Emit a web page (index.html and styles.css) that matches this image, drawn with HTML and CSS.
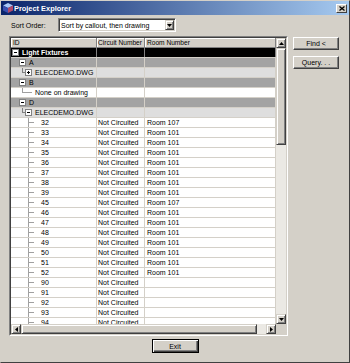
FILE: index.html
```html
<!DOCTYPE html>
<html lang="en">
<head>
  <meta charset="UTF-8">
  <title>Project Explorer</title>
  <link rel="stylesheet" href="styles.css">
</head>
<body>
  <div class="window">
    <div class="titlebar">
      <svg class="app-icon" width="10" height="10" viewBox="0 0 10 10">
        <polygon points="5,0 10,2.5 5,5 0,2.5" fill="#a8c8f8"/>
        <polygon points="0,2.5 5,5 5,10 0,7.5" fill="#3a4fb0"/>
        <polygon points="5,5 10,2.5 10,7.5 5,10" fill="#b04a6a"/>
      </svg>
      <span class="title">Project Explorer</span>
      <span class="close">
        <svg width="6" height="5" viewBox="0 0 6 5"><path d="M0.5 0.5 L5.5 4.5 M5.5 0.5 L0.5 4.5" stroke="#000" stroke-width="1.3"/></svg>
      </span>
    </div>

    <div class="content">
      <div class="sort-row">
        <span class="sort-label">Sort Order:</span>
        <div class="combo">
          <span class="combo-text">Sort by callout, then drawing</span>
          <span class="combo-btn"><svg width="5" height="3" viewBox="0 0 5 3"><polygon points="0,0 5,0 2.5,3" fill="#000"/></svg></span>
        </div>
      </div>

      <div class="main">
        <div class="grid">
          <div class="grid-inner">
            <div class="grid-view">
              <div class="rows">
                <div class="row head">
                  <div class="c-id">ID</div>
                  <div class="c-circ">Circuit Number</div>
                  <div class="c-room">Room Number</div>
                </div>
                <div class="row r-black">
                  <div class="c-id"><span class="tb minus l0"></span><span class="tt">Light Fixtures</span></div>
                  <div class="c-circ"></div>
                  <div class="c-room"></div>
                </div>
                <div class="row r-dark">
                  <div class="c-id"><span class="tb minus l1"></span><span class="tt">A</span></div>
                  <div class="c-circ"></div>
                  <div class="c-room"></div>
                </div>
                <div class="row r-light">
                  <div class="c-id branch"><span class="tb plus l2"></span><span class="tt">ELECDEMO.DWG</span></div>
                  <div class="c-circ"></div>
                  <div class="c-room"></div>
                </div>
                <div class="row r-dark">
                  <div class="c-id"><span class="tb minus l1"></span><span class="tt">B</span></div>
                  <div class="c-circ"></div>
                  <div class="c-room"></div>
                </div>
                <div class="row">
                  <div class="c-id none">None on drawing</div>
                  <div class="c-circ"></div>
                  <div class="c-room"></div>
                </div>
                <div class="row r-dark">
                  <div class="c-id"><span class="tb minus l1"></span><span class="tt">D</span></div>
                  <div class="c-circ"></div>
                  <div class="c-room"></div>
                </div>
                <div class="row r-light">
                  <div class="c-id branch"><span class="tb minus l2"></span><span class="tt">ELECDEMO.DWG</span></div>
                  <div class="c-circ"></div>
                  <div class="c-room"></div>
                </div>
                <div class="row"><div class="c-id leaf">32</div><div class="c-circ">Not Circuited</div><div class="c-room">Room 107</div></div>
                <div class="row"><div class="c-id leaf">33</div><div class="c-circ">Not Circuited</div><div class="c-room">Room 101</div></div>
                <div class="row"><div class="c-id leaf">34</div><div class="c-circ">Not Circuited</div><div class="c-room">Room 101</div></div>
                <div class="row"><div class="c-id leaf">35</div><div class="c-circ">Not Circuited</div><div class="c-room">Room 101</div></div>
                <div class="row"><div class="c-id leaf">36</div><div class="c-circ">Not Circuited</div><div class="c-room">Room 101</div></div>
                <div class="row"><div class="c-id leaf">37</div><div class="c-circ">Not Circuited</div><div class="c-room">Room 101</div></div>
                <div class="row"><div class="c-id leaf">38</div><div class="c-circ">Not Circuited</div><div class="c-room">Room 101</div></div>
                <div class="row"><div class="c-id leaf">39</div><div class="c-circ">Not Circuited</div><div class="c-room">Room 101</div></div>
                <div class="row"><div class="c-id leaf">45</div><div class="c-circ">Not Circuited</div><div class="c-room">Room 107</div></div>
                <div class="row"><div class="c-id leaf">46</div><div class="c-circ">Not Circuited</div><div class="c-room">Room 101</div></div>
                <div class="row"><div class="c-id leaf">47</div><div class="c-circ">Not Circuited</div><div class="c-room">Room 101</div></div>
                <div class="row"><div class="c-id leaf">48</div><div class="c-circ">Not Circuited</div><div class="c-room">Room 101</div></div>
                <div class="row"><div class="c-id leaf">49</div><div class="c-circ">Not Circuited</div><div class="c-room">Room 101</div></div>
                <div class="row"><div class="c-id leaf">50</div><div class="c-circ">Not Circuited</div><div class="c-room">Room 101</div></div>
                <div class="row"><div class="c-id leaf">51</div><div class="c-circ">Not Circuited</div><div class="c-room">Room 101</div></div>
                <div class="row"><div class="c-id leaf">52</div><div class="c-circ">Not Circuited</div><div class="c-room">Room 101</div></div>
                <div class="row"><div class="c-id leaf">90</div><div class="c-circ">Not Circuited</div><div class="c-room"></div></div>
                <div class="row"><div class="c-id leaf">91</div><div class="c-circ">Not Circuited</div><div class="c-room"></div></div>
                <div class="row"><div class="c-id leaf">92</div><div class="c-circ">Not Circuited</div><div class="c-room"></div></div>
                <div class="row"><div class="c-id leaf">93</div><div class="c-circ">Not Circuited</div><div class="c-room"></div></div>
                <div class="row"><div class="c-id leaf">94</div><div class="c-circ">Not Circuited</div><div class="c-room"></div></div>
              </div>
              <div class="vscroll">
                <span class="sb-btn"><svg width="5" height="3" viewBox="0 0 5 3"><polygon points="0,3 5,3 2.5,0" fill="#000"/></svg></span>
                <span class="sb-thumb v"></span>
                <span class="sb-track"></span>
                <span class="sb-btn"><svg width="5" height="3" viewBox="0 0 5 3"><polygon points="0,0 5,0 2.5,3" fill="#000"/></svg></span>
              </div>
            </div>
            <div class="hbar">
              <div class="hscroll">
                <span class="sb-btn"><svg width="3" height="5" viewBox="0 0 3 5"><polygon points="3,0 3,5 0,2.5" fill="#000"/></svg></span>
                <span class="sb-thumb h"></span>
                <span class="sb-track"></span>
                <span class="sb-btn"><svg width="3" height="5" viewBox="0 0 3 5"><polygon points="0,0 0,5 3,2.5" fill="#000"/></svg></span>
              </div>
              <div class="corner"></div>
            </div>
          </div>
        </div>

        <div class="side">
          <button class="btn">Find &lt;</button>
          <button class="btn">Query. . .</button>
        </div>
      </div>
    </div>

    <div class="footer">
      <button class="btn default">Exit</button>
    </div>
  </div>
</body>
</html>
```

FILE: styles.css
```css
body {
  margin: 0;
  font-family: "Liberation Sans", Arial, sans-serif;
  font-size: 7px;
  color: #000;
  background-color: #d4d0c8;
}

.window {
  width: 350px;
  height: 363px;
  box-sizing: border-box;
  border: 1px solid;
  border-color: #d4d0c8 #404040 #404040 #d4d0c8;
  background-color: #d4d0c8;
  display: flex;
  flex-direction: column;
}

.titlebar {
  height: 14px;
  display: flex;
  align-items: center;
  padding: 0 2px;
  background: linear-gradient(to right, #0a246a, #a6caf0);
  color: #fff;
  font-weight: bold;
  font-size: 7.4px;
}

.app-icon {
  margin-right: 1px;
}

.close {
  margin-left: auto;
  width: 11px;
  height: 9px;
  box-sizing: border-box;
  display: flex;
  align-items: center;
  justify-content: center;
  background-color: #d4d0c8;
  border: 1px solid;
  border-color: #fff #404040 #404040 #fff;
}

.content {
  padding: 3px 0 0 8px;
}

.sort-row {
  display: flex;
  align-items: center;
  height: 14px;
}

.sort-label {
  width: 47px;
  margin-left: 2px;
}

.combo {
  width: 118px;
  height: 14px;
  box-sizing: border-box;
  display: flex;
  align-items: center;
  padding: 0 1px 0 1px;
  background-color: #fff;
  border: 1px solid;
  border-color: #808080 #fff #fff #808080;
  box-shadow: inset 1px 1px #404040, inset -1px -1px #d4d0c8;
}

.combo-text {
  padding-left: 1px;
}

.combo-btn {
  margin-left: auto;
  width: 9px;
  height: 10px;
  box-sizing: border-box;
  display: flex;
  align-items: center;
  justify-content: center;
  background-color: #d4d0c8;
  border: 1px solid;
  border-color: #d4d0c8 #404040 #404040 #d4d0c8;
  box-shadow: inset 1px 1px #fff, inset -1px -1px #808080;
}

.main {
  display: flex;
  gap: 5px;
  margin-top: 4px;
}

.grid {
  width: 279px;
  height: 300px;
  box-sizing: border-box;
  border: 1px solid;
  border-color: #808080 #fff #fff #808080;
}

.grid-inner {
  height: 100%;
  box-sizing: border-box;
  border: 1px solid;
  border-color: #404040 #d4d0c8 #d4d0c8 #404040;
  display: flex;
  flex-direction: column;
}

.grid-view {
  display: flex;
  height: 286px;
}

.rows {
  width: 265px;
  overflow: hidden;
  background-color: #fff;
}

.row {
  display: flex;
  height: 10px;
  box-sizing: border-box;
  border-bottom: 1px solid #d4d0c8;
  line-height: 9px;
  white-space: nowrap;
}

.row > div {
  box-sizing: border-box;
  border-right: 1px solid #d4d0c8;
  overflow: hidden;
}

.c-id {
  width: 86px;
  display: flex;
  align-items: center;
}

.c-circ {
  width: 48px;
  padding-left: 1px;
}

.c-room {
  flex: 1;
  padding-left: 2px;
}

.row.head {
  background-color: #d4d0c8;
  border-bottom-color: #808080;
  font-size: 6.6px;
}

.row.head > div {
  border-right-color: #808080;
  box-shadow: inset 1px 1px #fff;
  padding-left: 2px;
}

.row.head > .c-circ {
  padding-left: 1px;
}

.r-black {
  background-color: #000;
  color: #fff;
  font-weight: bold;
}

.r-black > div {
  border-right-color: #808080 !important;
}

.r-dark {
  background-color: #a3a3a3;
}

.r-light {
  background-color: #dedede;
}

.tb {
  width: 7px;
  height: 7px;
  box-sizing: border-box;
  border: 1px solid #808080;
  background-color: #fff;
  flex-shrink: 0;
}

.tb.minus {
  background: linear-gradient(#000, #000) center / 3px 1px no-repeat, #fff;
}

.tb.plus {
  background: linear-gradient(#000, #000) center / 3px 1px no-repeat,
              linear-gradient(#000, #000) center / 1px 3px no-repeat, #fff;
}

.tb.l0 { margin-left: 1px; }
.tb.l1 { margin-left: 8px; }
.tb.l2 { margin-left: 14px; }

.tt {
  margin-left: 3px;
}

.branch {
  background-image: linear-gradient(#808080, #808080), linear-gradient(#808080, #808080);
  background-repeat: no-repeat;
  background-position: 11px 0, 11px 4px;
  background-size: 1px 5px, 3px 1px;
}

.none {
  padding-left: 24px;
  background-image: linear-gradient(#a0a0a0, #a0a0a0), linear-gradient(#a0a0a0, #a0a0a0);
  background-repeat: no-repeat;
  background-position: 11px 0, 11px 4px;
  background-size: 1px 5px, 10px 1px;
}

.leaf {
  padding-left: 30px;
  background-image: linear-gradient(#a0a0a0, #a0a0a0), linear-gradient(#a0a0a0, #a0a0a0);
  background-repeat: no-repeat;
  background-position: 17px 0, 18px 4px;
  background-size: 1px 100%, 5px 1px;
}

.vscroll {
  width: 10px;
  display: flex;
  flex-direction: column;
  background-color: #ebe9e4;
}

.sb-btn,
.sb-thumb {
  box-sizing: border-box;
  display: flex;
  align-items: center;
  justify-content: center;
  background-color: #d4d0c8;
  border: 1px solid;
  border-color: #d4d0c8 #404040 #404040 #d4d0c8;
  box-shadow: inset 1px 1px #fff, inset -1px -1px #808080;
  flex-shrink: 0;
}

.sb-btn {
  width: 10px;
  height: 10px;
}

.sb-thumb.v {
  height: 97px;
}

.sb-thumb.h {
  width: 236px;
}

.sb-track {
  flex: 1;
}

.hbar {
  display: flex;
  height: 10px;
}

.hscroll {
  width: 265px;
  display: flex;
  background-color: #ebe9e4;
}

.corner {
  flex: 1;
  background-color: #d4d0c8;
}

.side {
  display: flex;
  flex-direction: column;
  gap: 6px;
  margin-top: 1px;
}

.btn {
  width: 46px;
  height: 13px;
  box-sizing: border-box;
  padding: 0;
  font-family: inherit;
  font-size: 7px;
  color: #000;
  background-color: #d4d0c8;
  border: 1px solid;
  border-color: #fff #404040 #404040 #fff;
  box-shadow: inset -1px -1px #808080;
}

.footer {
  display: flex;
  justify-content: center;
  margin-top: 3px;
}

.btn.default {
  width: 47px;
  height: 14px;
  border: 1px solid #000;
  box-shadow: inset 1px 1px #fff, inset -1px -1px #404040, inset -2px -2px #808080;
}
```
